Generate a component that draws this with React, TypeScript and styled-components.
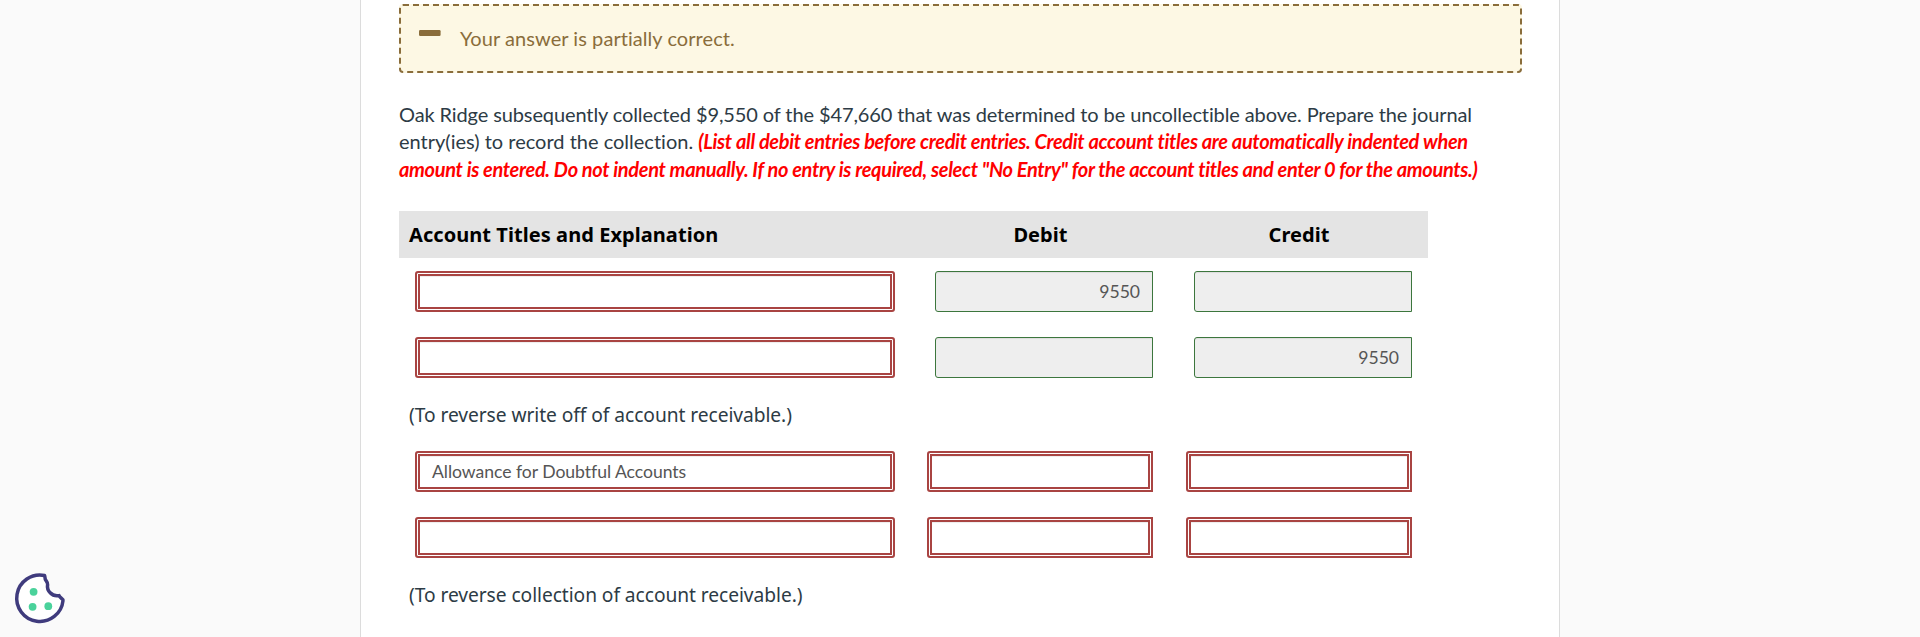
import React from "react";
import styled, { createGlobalStyle, css } from "styled-components";

const GlobalStyle = createGlobalStyle`
  *, *::before, *::after { box-sizing: border-box; }
  html, body { margin: 0; background: #fafafa; }
  body {
    overflow: hidden;
    color: #2d3b45;
    font: 400 20px/27.4px Lato, "Liberation Sans", sans-serif;
    font-variant-ligatures: none;
  }
`;

const Page = styled.div`
  display: flex;
  justify-content: center;
  height: 637px;
`;

const Panel = styled.main`
  width: 1200px;
  padding: 4px 37px 0 38px;
  background: #fff;
  border: solid #dcdcdc;
  border-width: 0 1px;
`;

const Alert = styled.div`
  display: flex;
  align-items: center;
  height: 69px;
  padding-left: 18px;
  color: #8a6d3b;
  background: #fdf8e4;
  border: 2px dashed #8a6d3b;
  border-radius: 4px;
`;

const MinusIcon = styled.svg`
  width: 22px;
  height: 6px;
  margin: 0 19px 11px 0;
`;

const AlertText = styled.span`
  letter-spacing: 0.06px;
`;

const Question = styled.p`
  margin: 28px 0 28px;
  white-space: nowrap;
`;

const Line = styled.span<{ $spacing: number }>`
  display: block;
  letter-spacing: ${(p) => p.$spacing}px;
`;

const Instruction = styled.em`
  color: #f00;
  font-weight: 700;
  letter-spacing: -0.33px;
`;

const Table = styled.section`
  width: 1029px;
`;

const Row = styled.div`
  display: grid;
  grid-template-columns: 512px 258px 259px;
  height: 66px;
  padding-top: 13px;
`;

const HeaderRow = styled(Row)`
  height: 47px;
  padding: 0;
  align-items: center;
  background: #e4e4e4;
  color: #000;
  font-family: "Noto Sans", sans-serif;
  font-weight: 700;
  letter-spacing: 0.06px;
`;

const Heading = styled.div<{ $center?: boolean }>`
  padding-left: ${(p) => (p.$center ? 1 : 10)}px;
  text-align: ${(p) => (p.$center ? "center" : "left")};
`;

const Note = styled.div`
  display: flex;
  align-items: center;
  height: 48px;
  padding: 1px 0 0 10px;
  font-family: "Noto Sans", sans-serif;
  font-size: 19.2px;
  letter-spacing: -0.06px;
`;

const correctField = css`
  padding: 0 12px;
  background: #eee;
  border: 1px solid #3c763d;
  box-shadow: inset 0 1px 1px rgba(0, 0, 0, 0.075);
`;

const wrongField = css`
  padding: 0 15px;
  background: #fff;
  border: 2px solid #a94442;
  box-shadow:
    inset 0 0 0 1px #fff,
    inset 0 0 0 3px #a94442,
    inset 0 4px 1px rgba(0, 0, 0, 0.075);
`;

const Field = styled.div<{ $correct?: boolean }>`
  display: flex;
  align-items: center;
  height: 41px;
  color: #555;
  font-size: 17.6px;
  letter-spacing: -0.04px;
  ${(p) => (p.$correct ? correctField : wrongField)}
`;

const AccountField = styled(Field)`
  margin: 0 16px;
  border-radius: 3px;
`;

const AmountField = styled(Field)`
  justify-content: flex-end;
  justify-self: end;
  width: ${(p) => (p.$correct ? 218 : 226)}px;
  margin-right: 16px;
  border-radius: 3px 0 0 3px;
`;

const CookieButton = styled.button`
  position: fixed;
  left: 10px;
  bottom: 8px;
  width: 60px;
  height: 60px;
  padding: 0;
  border: 0;
  background: none;
`;

interface EntryProps {
  account?: string;
  debit?: string;
  credit?: string;
  correct?: boolean;
}

function Entry({ account, debit, credit, correct }: EntryProps) {
  return (
    <Row>
      <AccountField>{account}</AccountField>
      <AmountField $correct={correct}>{debit}</AmountField>
      <AmountField $correct={correct}>{credit}</AmountField>
    </Row>
  );
}

function Cookie() {
  return (
    <CookieButton aria-label="Cookie preferences">
      <svg width="60" height="60" viewBox="0 0 60 60">
        <path
          d="M34.6 6.5A23.2 23.2 0 1 0 53 31.6C53.4 29.6 49.8 29.2 49 26.6C45.6 27.2 42.4 26.2 40.2 23.8C38 21.6 37 19 37.6 15.6C38 12.4 34.8 12 35 8.6Z"
          fill="#fff"
          stroke="#3f3b7d"
          strokeWidth="3.5"
          strokeLinejoin="round"
        />
        <g fill="#4ad29b">
          <circle cx="23.6" cy="22.8" r="3.9" />
          <circle cx="22.6" cy="37.8" r="3.9" />
          <circle cx="38.3" cy="37.2" r="3.9" />
        </g>
      </svg>
    </CookieButton>
  );
}

export default function App() {
  return (
    <>
      <GlobalStyle />
      <Page>
        <Panel>
          <Alert>
            <MinusIcon viewBox="0 0 22 6">
              <rect width="21.6" height="6" rx="1.2" fill="#8a6d3b" />
            </MinusIcon>
            <AlertText>Your answer is partially correct.</AlertText>
          </Alert>
          <Question>
            <Line $spacing={-0.11}>
              Oak Ridge subsequently collected $9,550 of the $47,660 that was determined to be uncollectible above. Prepare the journal
            </Line>
            <Line $spacing={0}>
              entry(ies) to record the collection.{" "}
              <Instruction>
                (List all debit entries before credit entries. Credit account titles are automatically indented when
              </Instruction>
            </Line>
            <Line $spacing={0}>
              <Instruction>
                amount is entered. Do not indent manually. If no entry is required, select "No Entry" for the account titles and enter 0 for the amounts.)
              </Instruction>
            </Line>
          </Question>
          <Table>
            <HeaderRow>
              <Heading>Account Titles and Explanation</Heading>
              <Heading $center>Debit</Heading>
              <Heading $center>Credit</Heading>
            </HeaderRow>
            <Entry correct debit="9550" />
            <Entry correct credit="9550" />
            <Note>(To reverse write off of account receivable.)</Note>
            <Entry account="Allowance for Doubtful Accounts" />
            <Entry />
            <Note>(To reverse collection of account receivable.)</Note>
          </Table>
        </Panel>
      </Page>
      <Cookie />
    </>
  );
}
